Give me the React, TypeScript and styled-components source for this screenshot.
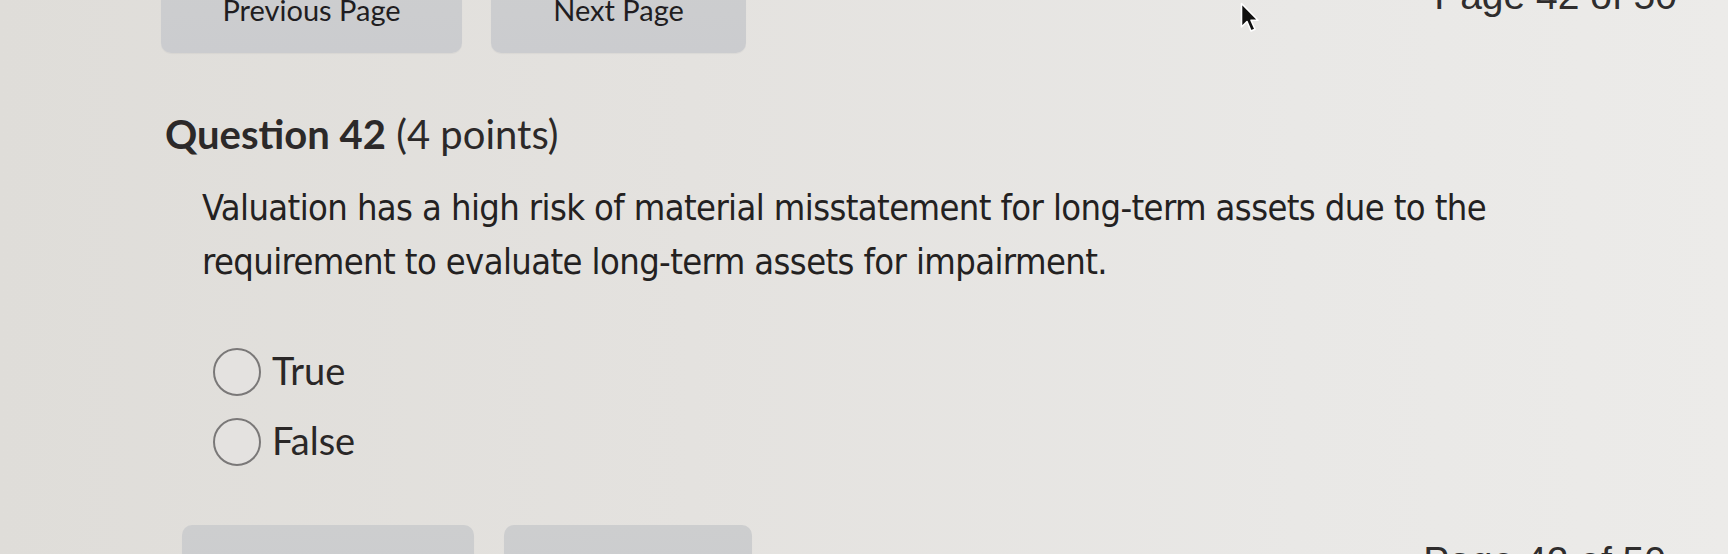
import React from "react";
import styled, { createGlobalStyle } from "styled-components";

const GlobalStyle = createGlobalStyle`
  html, body {
    margin: 0;
    padding: 0;
    height: 100%;
    overflow: hidden;
  }
  body {
    background: linear-gradient(90deg, #dfddd9 0%, #e4e2df 40%, #e9e8e6 75%, #ecebe9 100%);
    font-family: Lato, "Open Sans", sans-serif;
    color: #2b2828;
  }
`;

const Page = styled.div`
  position: relative;
  display: flex;
  flex-direction: column;
  margin-top: -30px;
  padding-left: 161px;
`;

const NavBar = styled.div<{ $offset?: number }>`
  display: flex;
  align-items: flex-start;
  height: 83px;
  padding-left: ${(p) => p.$offset ?? 0}px;
`;

const NavButton = styled.button<{ $w: number; $gap?: number }>`
  width: ${(p) => p.$w}px;
  height: 83px;
  margin-left: ${(p) => p.$gap ?? 0}px;
  flex: none;
  border: none;
  border-radius: 10px;
  background: linear-gradient(180deg, #cdcecf 0%, #cbcccf 100%);
  font-family: Lato, "Open Sans", sans-serif;
  font-size: 29px;
  line-height: 29px;
  color: #1f1d21;
  display: flex;
  justify-content: center;
  align-items: flex-start;
  padding: 25px 0 0;
  box-shadow: 0 1px 1px rgba(0, 0, 0, 0.04);
`;

const PageCount = styled.div<{ $top: number; $right: number }>`
  margin-left: auto;
  margin-top: ${(p) => p.$top}px;
  padding-right: ${(p) => p.$right}px;
  font-family: "Liberation Sans", Arial, sans-serif;
  font-size: 39px;
  line-height: 1;
  color: #2f2d2d;
`;

const Heading = styled.h2`
  margin: 57px 0 0 4px;
  font-family: Lato, "Open Sans", sans-serif;
  font-size: 40px;
  line-height: 48px;
  font-weight: 400;
  color: #2c2929;
`;

const Strong = styled.span`
  font-weight: 700;
`;

const Prompt = styled.p`
  margin: 23px 0 0 41px;
  font-family: "DejaVu Sans Condensed", "Liberation Sans Narrow", "Liberation Sans", sans-serif;
  font-size: 36px;
  letter-spacing: -0.6px;
  line-height: 54px;
  color: #232121;
  white-space: nowrap;
`;

const Options = styled.div`
  display: flex;
  flex-direction: column;
  margin: 48px 0 0 52px;
`;

const OptionRow = styled.label`
  display: flex;
  align-items: center;
  height: 70px;
  gap: 11px;
`;

const Radio = styled.span`
  width: 44px;
  height: 44px;
  border-radius: 50%;
  border: 2px solid #7a7878;
  background: #e4e2e0;
  flex: none;
`;

const OptionText = styled.span`
  font-family: Lato, "Open Sans", sans-serif;
  font-size: 38px;
  line-height: 1;
  color: #2a2727;
  padding-bottom: 4px;
`;

const FooterBar = styled(NavBar)`
  margin-top: 48px;
`;

const Pointer = styled.svg`
  position: absolute;
  left: 1240px;
  top: 32px;
`;

export default function App() {
  return (
    <>
      <GlobalStyle />
      <Page>
        <NavBar>
          <NavButton $w={301}>Previous Page</NavButton>
          <NavButton $w={255} $gap={29}>Next Page</NavButton>
          <PageCount $top={6} $right={51}>Page 42 of 50</PageCount>
        </NavBar>

        <Heading>
          <Strong>Question 42</Strong> (4 points)
        </Heading>

        <Prompt>
          Valuation has a high risk of material misstatement for long-term assets due to the
          <br />
          requirement to evaluate long-term assets for impairment.
        </Prompt>

        <Options>
          <OptionRow>
            <Radio />
            <OptionText>True</OptionText>
          </OptionRow>
          <OptionRow>
            <Radio />
            <OptionText>False</OptionText>
          </OptionRow>
        </Options>

        <FooterBar $offset={21}>
          <NavButton $w={292}>Previous Page</NavButton>
          <NavButton $w={248} $gap={30}>Next Page</NavButton>
          <PageCount $top={16} $right={62}>Page 42 of 50</PageCount>
        </FooterBar>

        <Pointer width="20" height="32" viewBox="0 0 20 32">
          <path
            d="M1.5 1.5 L1.5 25 L7 19.5 L11 29 L15 27.3 L11 18.2 L18 18.2 Z"
            fill="#111"
            stroke="#fff"
            strokeWidth="1.6"
            strokeLinejoin="round"
          />
        </Pointer>
      </Page>
    </>
  );
}
